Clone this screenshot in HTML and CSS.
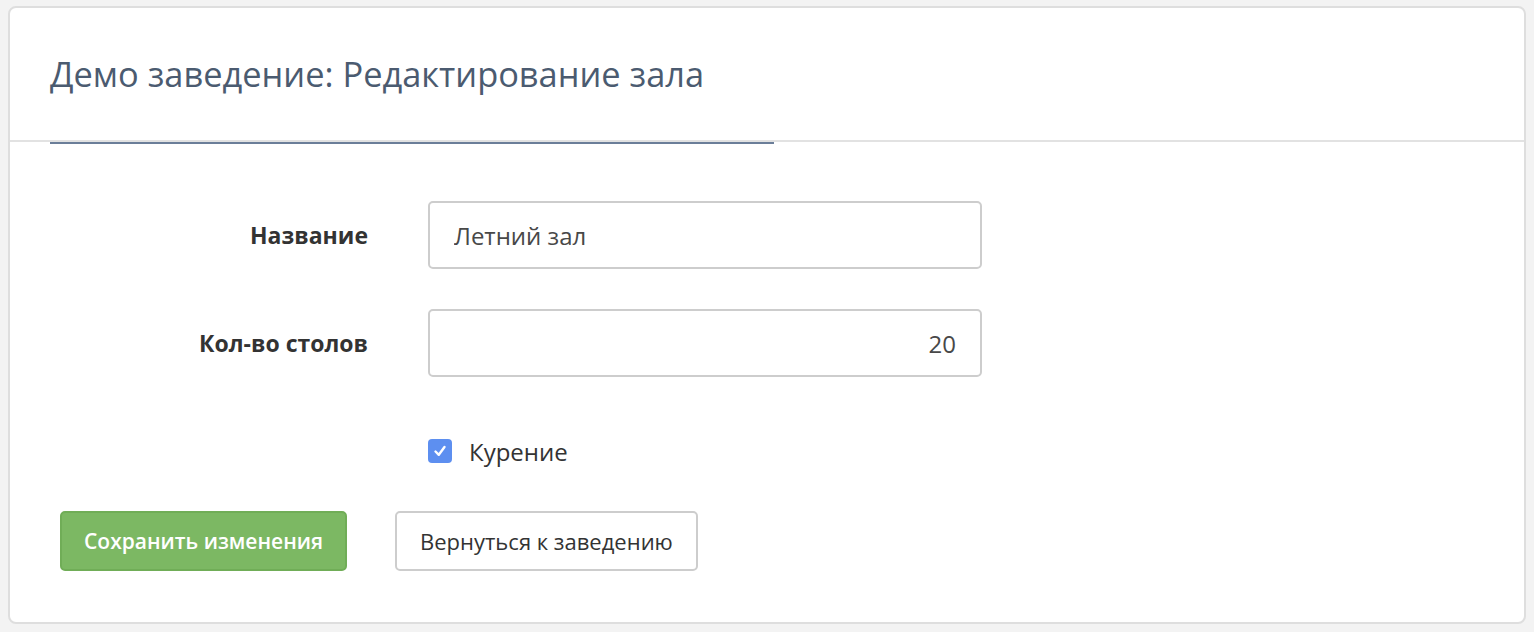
FILE: index.html
```html
<!DOCTYPE HTML>
<html>
    <head>
        <meta charset="utf-8">
        <link rel="stylesheet" href="styles.css">
    </head>
    <body>
        <div class="card">
            <div class="card-head">
                <h1 class="card-title">Демо заведение: Редактирование зала</h1>
            </div>
            <form class="card-body">
                <div class="row">
                    <label class="row-label" for="hallName">Название</label>
                    <input class="field" type="text" id="hallName" value="Летний зал"/>
                </div>
                <div class="row">
                    <label class="row-label" for="tableCount">Кол-во столов</label>
                    <input class="field field-num" type="text" id="tableCount" value="20"/>
                </div>
                <div class="row row-check">
                    <span></span>
                    <label class="check" for="smoking">
                        <span class="check-box">
                            <svg width="16" height="16" viewBox="0 0 16 16"><path d="M3.5 8.5 L6.8 11.8 L12.5 4" fill="none" stroke="#fff" stroke-width="2.4" stroke-linecap="round" stroke-linejoin="round"/></svg>
                        </span>
                        Курение
                    </label>
                </div>
                <div class="actions">
                    <button type="button" class="btn btn-save">Сохранить изменения</button>
                    <button type="button" class="btn btn-back">Вернуться к заведению</button>
                </div>
            </form>
        </div>
    </body>
</html>
```

FILE: styles.css
```css
body {
  margin: 6px 8px;
  background: #f3f3f3;
  font-family: "Open Sans", "Noto Sans", sans-serif;
  color: #333;
}

.card {
  background: #fff;
  border: 2px solid #dedede;
  border-radius: 8px;
  height: 618px;
  box-sizing: border-box;
}

.card-head {
  height: 132px;
  border-bottom: 2px solid #e2e2e2;
  padding: 0 40px;
  display: flex;
  align-items: flex-end;
}

.card-title {
  margin: 0 0 -4px 0;
  width: 724px;
  height: 90px;
  border-bottom: 2px solid #6b7e99;
  font-size: 34.4px;
  font-weight: normal;
  color: #4b5b70;
  line-height: 44px;
}

.card-body {
  padding: 59px 0 0 40px;
}

.row {
  display: grid;
  grid-template-columns: 318px 554px;
  column-gap: 60px;
  align-items: center;
  margin-bottom: 40px;
}

.row-check {
  height: 68px;
  margin-bottom: 26px;
}

.row-label {
  text-align: right;
  font-weight: bold;
  font-size: 23px;
  color: #333;
}

.field {
  height: 68px;
  box-sizing: border-box;
  border: 2px solid #cdcdcd;
  border-radius: 5px;
  padding: 0 24px;
  font-family: inherit;
  font-size: 24px;
  color: #484848;
}

.field-num {
  text-align: right;
}

.check {
  display: flex;
  align-items: center;
  gap: 17px;
  font-size: 24px;
  color: #333;
}

.check-box {
  width: 24px;
  height: 24px;
  border-radius: 4px;
  background: #5d8ff0;
  display: flex;
  align-items: center;
  justify-content: center;
}

.actions {
  display: flex;
  gap: 48px;
  padding-left: 10px;
}

.btn {
  height: 60px;
  border-radius: 5px;
  font-family: inherit;
  box-sizing: border-box;
}

.btn-save {
  background: #7cb863;
  border: 2px solid #70ad57;
  color: #fff;
  font-weight: 600;
  font-size: 21px;
  padding: 0 22px;
}

.btn-back {
  background: #fff;
  border: 2px solid #cdcdcd;
  color: #333;
  font-size: 22px;
  padding: 0 23px;
}
```
